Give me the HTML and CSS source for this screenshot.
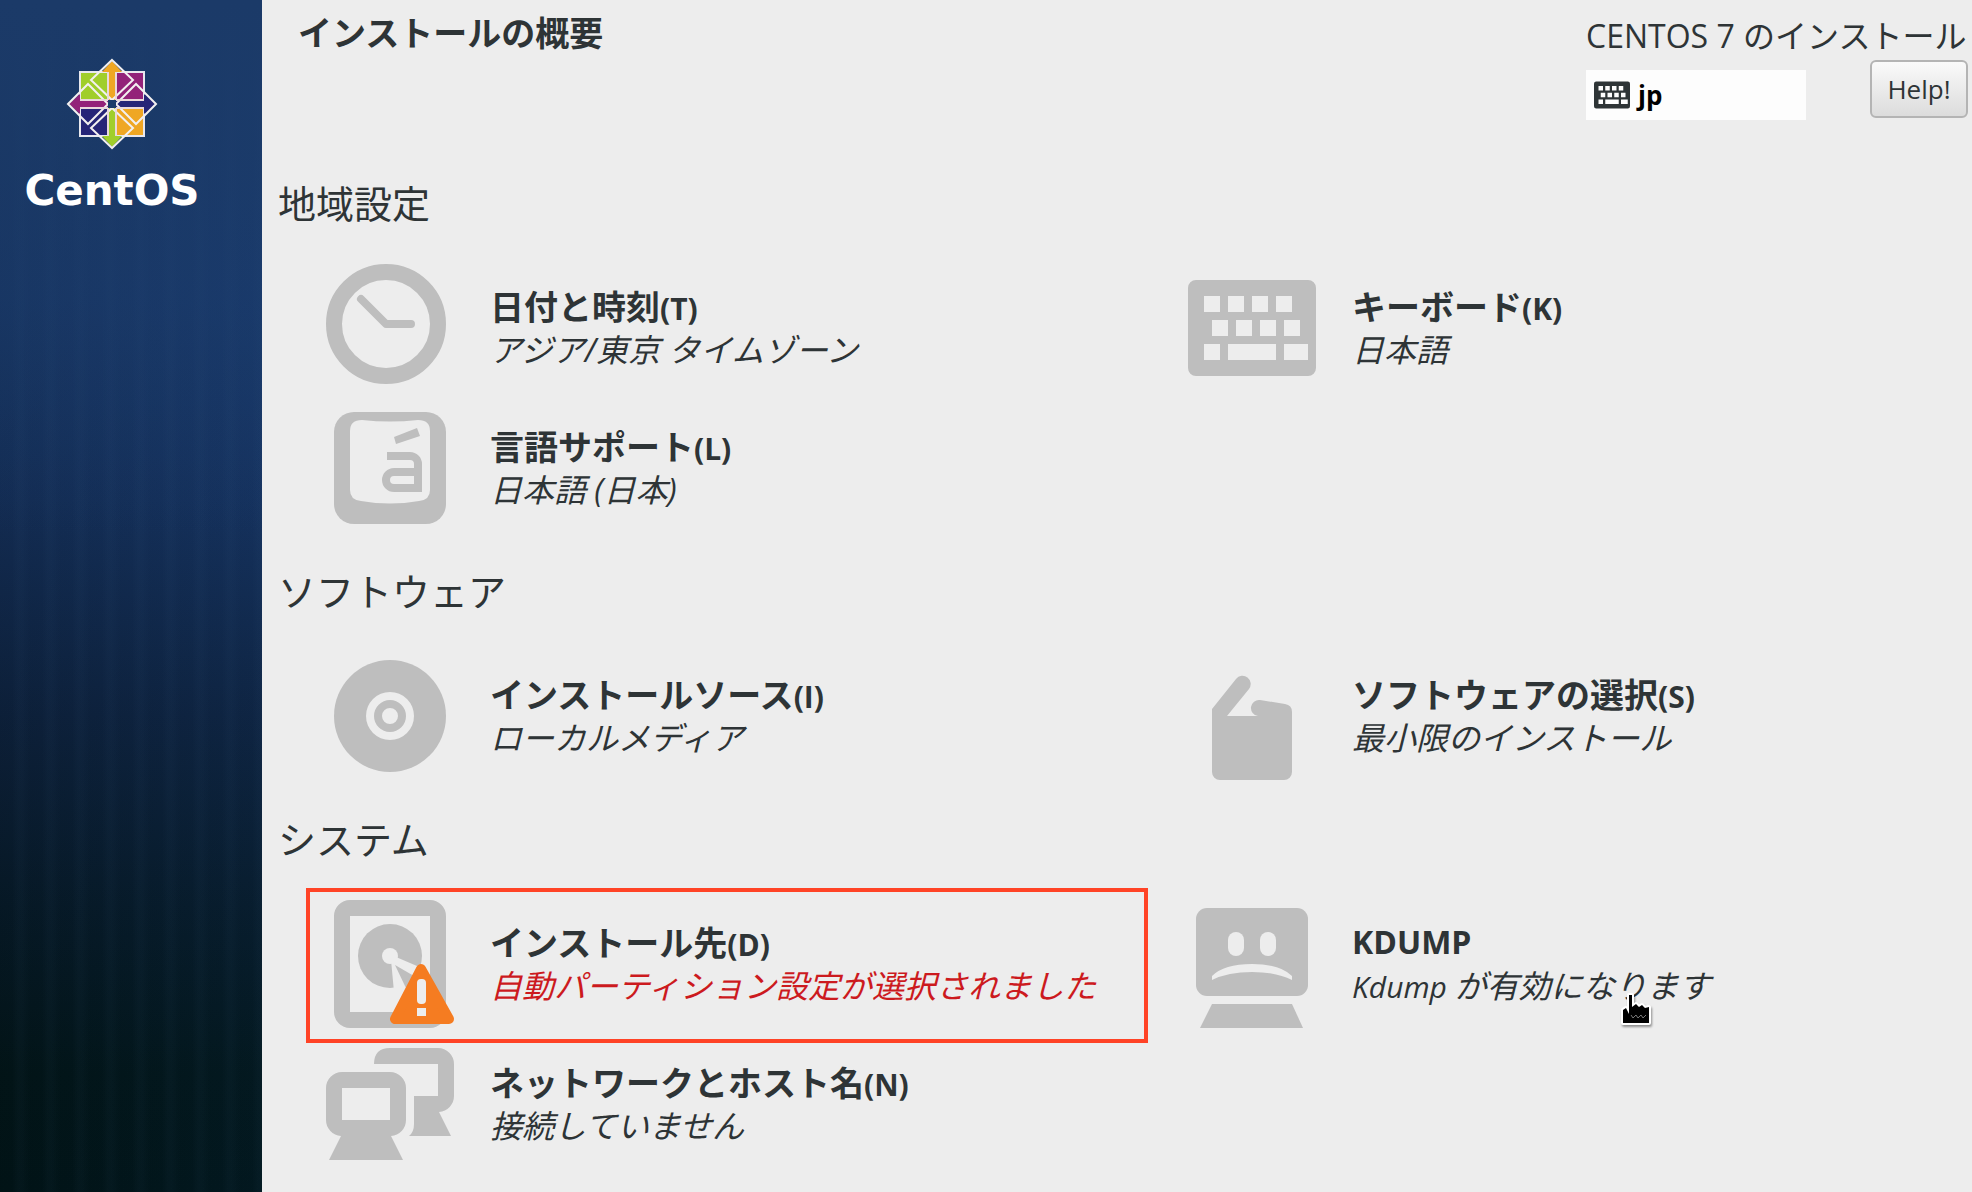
FILE: index.html
```html
<!DOCTYPE html>
<html lang="ja">
<head>
<meta charset="utf-8">
<title>インストールの概要</title>
<link rel="stylesheet" href="styles.css">
</head>
<body>
<svg class="defs" aria-hidden="true">
  <symbol id="keyboard" viewBox="0 16 128 96">
    <path fill="currentColor" fill-rule="evenodd" d="M8 16H120a8 8 0 0 1 8 8V104a8 8 0 0 1-8 8H8a8 8 0 0 1-8-8V24a8 8 0 0 1 8-8ZM16 32v16h16V32ZM40 32v16h16V32ZM64 32v16h16V32ZM88 32v16h16V32ZM24 56v16h16V56ZM48 56v16h16V56ZM72 56v16h16V56ZM96 56v16h16V56ZM16 80v16h16V80ZM40 80v16h48V80ZM96 80v16h24V80Z"/>
  </symbol>
</svg>
<div class="installer">
  <aside class="sidebar">
    <svg class="logo-mark" viewBox="-46 -46 92 92" aria-hidden="true">
      <g stroke="#e8e8ee" stroke-width="2">
        <path fill="#a0ce2b" d="M-32-32H-4V-4H-32Z"/>
        <path fill="#932279" d="M4-32H32V-4H4Z"/>
        <path fill="#efa724" d="M4 4H32V32H4Z"/>
        <path fill="#262577" d="M-32 4H-4V32H-32Z"/>
      </g>
      <path fill="#efa724" d="M-10-32 0-43 10-32H4V-4H-4V-32Z"/>
      <path fill="#a0ce2b" d="M-10 32 0 43 10 32H4V4H-4V32Z"/>
      <path fill="#932279" d="M-32-10-43 0-32 10V4H-4V-4H-32Z"/>
      <path fill="#262577" d="M32-10 43 0 32 10V4H4V-4H32Z"/>
      <g fill="none" stroke="#f3f0f0" stroke-width="2">
        <path d="M0-44 21-24 0-4-21-24ZM44 0 24 20 4 0 24-20ZM0 44-21 24 0 4 21 24ZM-44 0-24-20-4 0-24 20Z"/>
        <path d="M-4-32V-4H-32M4-32V-4H32M4 32V4H32M-4 32V4H-32" stroke="#e9d9dc"/>
      </g>
      <path fill="#1b3c6b" d="M-4-4H4V4H-4Z"/>
    </svg>
    <span class="logo-name">CentOS</span>
  </aside>

  <main class="hub">
    <header class="topbar">
      <h1 class="title">インストールの概要</h1>
      <div class="status">
        <p class="product"><span class="latin">CENTOS 7 </span>のインストール</p>
        <div class="controls">
          <button class="layout" type="button"><svg class="layout-icon" aria-hidden="true"><use href="#keyboard"/></svg><span>jp</span></button>
          <button class="help" type="button">Help!</button>
        </div>
      </div>
    </header>

    <section>
      <h2 class="heading">地域設定</h2>
      <div class="spokes">
        <button class="spoke" type="button">
          <svg class="icon" viewBox="0 0 128 128" aria-hidden="true"><circle cx="60" cy="60" r="52" fill="none" stroke="#bebebe" stroke-width="16"/><path d="M35 35 60 60H85" fill="none" stroke="#bebebe" stroke-width="8" stroke-linecap="round" stroke-linejoin="round"/></svg>
          <span class="text"><b class="name">日付と時刻<span class="latin key">(T)</span></b><i class="state">アジア<span class="latin">/</span>東京<span class="latin"> </span>タイムゾーン</i></span>
        </button>
        <button class="spoke" type="button">
          <svg class="icon" aria-hidden="true"><use href="#keyboard"/></svg>
          <span class="text"><b class="name">キーボード<span class="latin key">(K)</span></b><i class="state">日本語</i></span>
        </button>
        <button class="spoke" type="button">
          <svg class="icon" viewBox="0 0 128 128" aria-hidden="true"><rect x="8" y="8" width="112" height="112" rx="20" fill="#bebebe"/><path fill="#ededed" d="M36 16Q64 19 92 16Q104 16 104 27V86Q104 96 93 97Q64 102 35 97Q24 96 24 86V27Q24 16 36 16Z"/><path d="M61 52H84a8 8 0 0 1 8 8V84H68a8 8 0 0 1 0-16H92" fill="none" stroke="#bebebe" stroke-width="8"/><path fill="#bebebe" d="M68 33 91 24 94 32 70 40Z"/></svg>
          <span class="text"><b class="name">言語サポート<span class="latin key">(L)</span></b><i class="state">日本語<span class="latin"> (</span>日本<span class="latin">)</span></i></span>
        </button>
      </div>
    </section>

    <section>
      <h2 class="heading">ソフトウェア</h2>
      <div class="spokes">
        <button class="spoke" type="button">
          <svg class="icon" viewBox="0 0 128 128" aria-hidden="true"><circle cx="64" cy="64" r="56" fill="#bebebe"/><circle cx="64" cy="64" r="24" fill="#ededed"/><circle cx="64" cy="64" r="12" fill="none" stroke="#bebebe" stroke-width="8"/></svg>
          <span class="text"><b class="name">インストールソース<span class="latin key">(I)</span></b><i class="state">ローカルメディア</i></span>
        </button>
        <button class="spoke" type="button">
          <svg class="icon" viewBox="0 0 128 128" aria-hidden="true"><path fill="#bebebe" d="M24 57 48 27A8 8 0 0 1 61 37L39 64H70A8 8 0 0 1 72 48L97 52Q104 53 104 60V120a8 8 0 0 1-8 8H32a8 8 0 0 1-8-8Z"/></svg>
          <span class="text"><b class="name">ソフトウェアの選択<span class="latin key">(S)</span></b><i class="state">最小限のインストール</i></span>
        </button>
      </div>
    </section>

    <section>
      <h2 class="heading">システム</h2>
      <div class="spokes">
        <button class="spoke marked" type="button">
          <svg class="icon" viewBox="0 0 128 128" aria-hidden="true"><path fill="#bebebe" fill-rule="evenodd" d="M24 0H104a16 16 0 0 1 16 16V112a16 16 0 0 1-16 16H24a16 16 0 0 1-16-16V16A16 16 0 0 1 24 0ZM24 16V112H104V16Z"/><circle cx="64" cy="56" r="32" fill="#bebebe"/><path fill="#ededed" d="M65 60 68 92H98L98 69 70 57Z"/><circle cx="64" cy="56" r="8" fill="#ededed"/><path fill="#bebebe" d="M69 65 79 86 92 108 99 100 88 76Z"/><path d="M95 69 69 119H123Z" fill="#f57c21" stroke="#f57c21" stroke-width="10" stroke-linejoin="round"/><rect x="91" y="79" width="9" height="25" rx="4" fill="#ededed"/><path fill="#ededed" d="M91 108H100V116H91Z"/></svg>
          <span class="text"><b class="name">インストール先<span class="latin key">(D)</span></b><i class="state warning">自動パーティション設定が選択されました</i></span>
        </button>
        <button class="spoke" type="button">
          <svg class="icon" viewBox="0 0 128 128" aria-hidden="true"><rect x="8" y="8" width="112" height="88" rx="11" fill="#bebebe"/><path fill="#bebebe" d="M24 104H104L115 128H12Z"/><g fill="#ededed"><rect x="40" y="32" width="16" height="24" rx="8"/><rect x="72" y="32" width="16" height="24" rx="8"/><path d="M24 76Q36 64 64 64T104 76V80Q88 72 64 72T24 80Z"/></g></svg>
          <span class="text"><b class="name latin-name">KDUMP</b><i class="state"><span class="latin key">Kdump </span>が有効になります</i>
            <svg class="cursor" viewBox="0 0 36 36" aria-hidden="true"><path d="M8 2H11V14L15 11 18 14 21 12 24 15 28 14V30H2V17L5 15 8 21Z" fill="#000" stroke="#fff" stroke-width="4" stroke-linejoin="round" paint-order="stroke"/><path d="M10 22l2 3 3-3 2 3 3-3 2 3 3-3" fill="none" stroke="#777" stroke-width="1"/></svg>
          </span>
        </button>
        <button class="spoke" type="button">
          <svg class="icon" viewBox="0 0 128 128" aria-hidden="true"><path fill="#bebebe" fill-rule="evenodd" d="M16 32H64a16 16 0 0 1 16 16V80a16 16 0 0 1-15 16L77 120H3L15 96A16 16 0 0 1 0 80V48A16 16 0 0 1 16 32ZM16 48V80H64V48Z"/><path fill="#bebebe" d="M48 24Q48 8 64 8H112a16 16 0 0 1 16 16V56a16 16 0 0 1-15 16L125 96H83Q88 92 88 84V56H112V24Z"/></svg>
          <span class="text"><b class="name">ネットワークとホスト名<span class="latin key">(N)</span></b><i class="state">接続していません</i></span>
        </button>
      </div>
    </section>
  </main>
</div>
</body>
</html>
```
FILE: styles.css
```css
* { box-sizing: border-box; }

body {
  margin: 0;
  background: #ededed;
  color: #2e3436;
  font-family: "Noto Sans CJK JP", sans-serif;
}

button {
  padding: 0;
  border: 0;
  background: none;
  color: inherit;
  font: inherit;
  text-align: left;
}

.defs { position: absolute; width: 0; height: 0; }

.latin, .latin-name { font-family: "Open Sans", "Noto Sans CJK JP", sans-serif; }

.installer { display: flex; min-height: 100vh; }

/* Branding column */
.sidebar {
  flex: 0 0 262px;
  display: flex;
  flex-direction: column;
  align-items: center;
  padding: 58px 38px 0 0;
  overflow: hidden;
  color: #fff;
  background:
    linear-gradient(#1b3a68 0, rgba(27, 58, 104, 0) 45%),
    repeating-linear-gradient(90deg, rgba(80, 120, 160, 0) 0 12px, rgba(80, 120, 160, .04) 18px 22px, rgba(80, 120, 160, 0) 30px),
    linear-gradient(90deg, rgba(0, 10, 20, .12), rgba(20, 70, 140, .08)),
    linear-gradient(#1b3c6c 0, #19396a 25%, #15305a 42%, #0e223d 60%, #071a27 76%, #021517 90%, #011416 100%);
}

.logo-mark { width: 92px; height: 92px; }

.logo-name {
  margin-top: 16px;
  font: bold 42px/50px "DejaVu Sans", sans-serif;
}

.hub { flex: 1; min-width: 0; }

/* Header */
.topbar {
  display: flex;
  justify-content: space-between;
  height: 144px;
  padding-left: 36px;
}

.title { margin: 8px 0 0; font-size: 34px; line-height: 48px; font-weight: 700; }

.status { width: 386px; }

.product { margin: 10px 0 0; font-size: 32px; line-height: 48px; white-space: nowrap; }

.controls {
  display: flex;
  justify-content: space-between;
  padding-right: 4px;
}

.layout {
  display: flex;
  align-items: center;
  gap: 8px;
  width: 220px;
  height: 50px;
  margin-top: 10px;
  padding-left: 8px;
  background: #fdfdfd;
  color: #000;
  font: bold 26px/50px "Open Sans", sans-serif;
}

.layout-icon { width: 36px; height: 28px; color: #2e3436; }

.help {
  width: 98px;
  height: 58px;
  border: 2px solid #b4b4b4;
  border-radius: 6px;
  background: linear-gradient(#fafafa, #dcdcdc);
  font: 26px/50px "Open Sans", sans-serif;
  text-align: center;
}

/* Categories */
.heading {
  margin: 0;
  padding: 0 0 4px 16px;
  font-size: 38px;
  font-weight: 400;
  line-height: 116px;
}

.spokes {
  display: grid;
  grid-template-columns: 842fr 804fr;
  gap: 12px 20px;
  padding-left: 44px;
}

.spoke {
  position: relative;
  display: flex;
  align-items: center;
  gap: 36px;
  height: 128px;
  padding-left: 20px;
}

.icon { flex: none; width: 128px; height: 128px; color: #bebebe; }

.text { position: relative; padding-bottom: 2px; white-space: nowrap; }

.name, .state { display: block; height: 42px; line-height: 42px; }
.name { font-size: 34px; font-weight: 700; }
.key { font-size: 30px; }
.latin-name { font-size: 32px; }
.state { font-size: 32px; font-style: italic; }
.warning { color: #cc1a1e; }

/* Frame that calls out the spoke needing attention */
.marked::after {
  content: "";
  position: absolute;
  inset: -12px 0 -15px;
  border: 4px solid #ff4326;
}

.cursor {
  position: absolute;
  left: 269px;
  top: 72px;
  width: 36px;
  height: 36px;
  filter: drop-shadow(1px 2px 1px rgba(0, 0, 0, .4));
}
```
